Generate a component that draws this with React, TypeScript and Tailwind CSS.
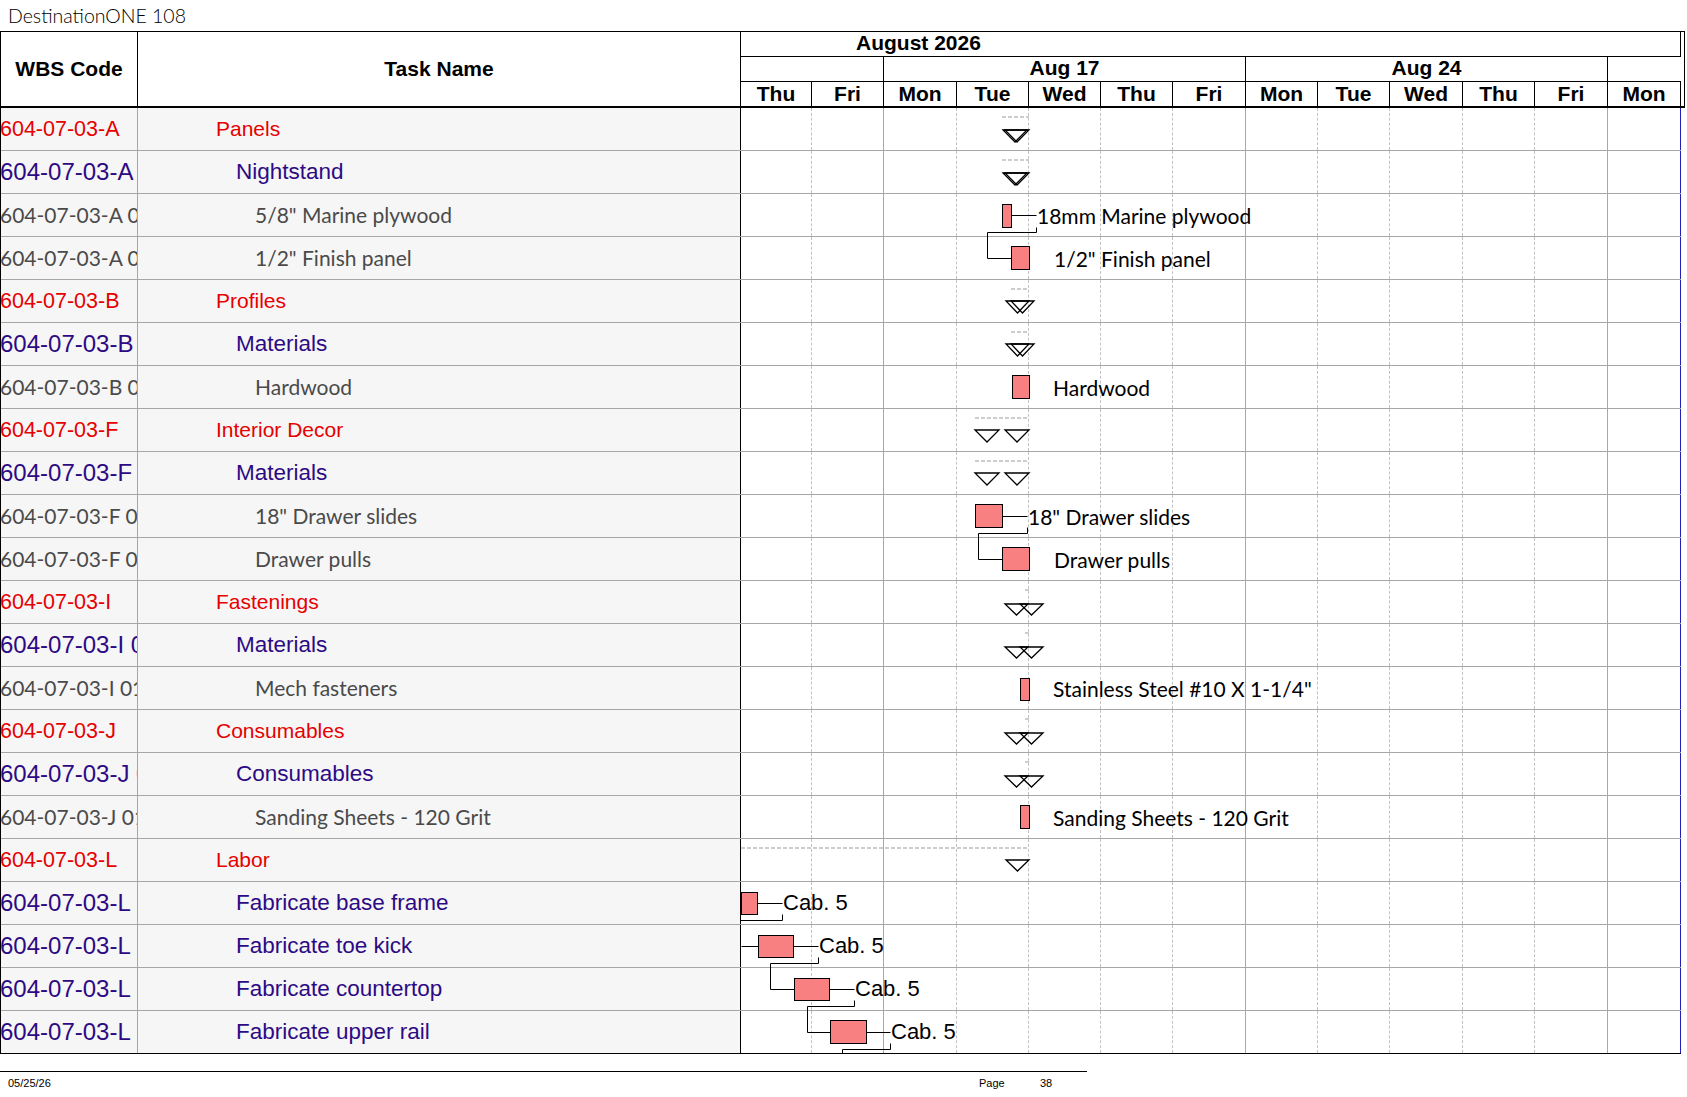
import React from 'react'

type Row = { wbs: string; task: string; lvl: 1 | 2 | 3 }

const rows: Row[] = [
  { wbs: '604-07-03-A', task: 'Panels', lvl: 1 },
  { wbs: '604-07-03-A 01', task: 'Nightstand', lvl: 2 },
  { wbs: '604-07-03-A 01 01', task: '5/8" Marine plywood', lvl: 3 },
  { wbs: '604-07-03-A 01 02', task: '1/2" Finish panel', lvl: 3 },
  { wbs: '604-07-03-B', task: 'Profiles', lvl: 1 },
  { wbs: '604-07-03-B 01', task: 'Materials', lvl: 2 },
  { wbs: '604-07-03-B 01 01', task: 'Hardwood', lvl: 3 },
  { wbs: '604-07-03-F', task: 'Interior Decor', lvl: 1 },
  { wbs: '604-07-03-F 01', task: 'Materials', lvl: 2 },
  { wbs: '604-07-03-F 01 01', task: '18" Drawer slides', lvl: 3 },
  { wbs: '604-07-03-F 01 02', task: 'Drawer pulls', lvl: 3 },
  { wbs: '604-07-03-I', task: 'Fastenings', lvl: 1 },
  { wbs: '604-07-03-I 01', task: 'Materials', lvl: 2 },
  { wbs: '604-07-03-I 01 01', task: 'Mech fasteners', lvl: 3 },
  { wbs: '604-07-03-J', task: 'Consumables', lvl: 1 },
  { wbs: '604-07-03-J 01', task: 'Consumables', lvl: 2 },
  { wbs: '604-07-03-J 01 01', task: 'Sanding Sheets - 120 Grit', lvl: 3 },
  { wbs: '604-07-03-L', task: 'Labor', lvl: 1 },
  { wbs: '604-07-03-L 01', task: 'Fabricate base frame', lvl: 2 },
  { wbs: '604-07-03-L 02', task: 'Fabricate toe kick', lvl: 2 },
  { wbs: '604-07-03-L 03', task: 'Fabricate countertop', lvl: 2 },
  { wbs: '604-07-03-L 04', task: 'Fabricate upper rail', lvl: 2 },
]

const days = ['Thu', 'Fri', 'Mon', 'Tue', 'Wed', 'Thu', 'Fri', 'Mon', 'Tue', 'Wed', 'Thu', 'Fri', 'Mon']

const arial = "font-['Liberation_Sans',Arial,sans-serif]"
const calibri = "font-['Lato','Open_Sans',sans-serif]"

const wbsCls = {
  1: `${arial} text-[21.5px] text-[#e60000]`,
  2: `${arial} text-[24px] text-[#2d0a84]`,
  3: `${calibri} text-[21px] text-[#4a4a4a]`,
}
const taskCls = {
  1: `${arial} text-[21px] text-[#e60000] pl-[78px]`,
  2: `${arial} text-[22.5px] text-[#2d0a84] pl-[98px]`,
  3: `${calibri} text-[21px] text-[#4a4a4a] pl-[117px]`,
}

function cellLine(i: number) {
  if (i === 12) return 'border-r border-[#2020c0]'
  if (i === 1 || i === 6 || i === 11) return 'border-r border-[#a8a8a8]'
  return 'border-r border-dashed border-[#c2c2c2]'
}

const rt = (k: number) => k * 43

function Summary({ k, dash, tris, top = 22, h = 12 }: { k: number; dash: [number, number]; tris: [number, number][]; top?: number; h?: number }) {
  const y = rt(k) + top
  return (
    <g>
      <line x1={dash[0]} x2={dash[1]} y1={rt(k) + 9} y2={rt(k) + 9} stroke="#bdbdbd" strokeWidth={1.5} strokeDasharray="4 2" />
      {tris.map(([a, b], i) => (
        <polygon key={i} points={`${a},${y} ${b},${y} ${(a + b) / 2},${y + h}`} fill="none" stroke="#000" strokeWidth={1.3} />
      ))}
    </g>
  )
}

function Bar({ k, x1, x2, top = 10, h = 23 }: { k: number; x1: number; x2: number; top?: number; h?: number }) {
  return <rect x={x1 + 0.5} y={rt(k) + top + 0.5} width={x2 - x1} height={h} fill="#f98080" stroke="#000" strokeWidth={1} />
}

function Path({ pts }: { pts: [number, number][] }) {
  return <polyline points={pts.map(([x, y]) => `${x + 0.5},${y + 0.5}`).join(' ')} fill="none" stroke="#000" strokeWidth={1} />
}

const labels: { k: number; x: number; text: string; cab?: boolean }[] = [
  { k: 2, x: 295, text: '18mm Marine plywood' },
  { k: 3, x: 312, text: '1/2" Finish panel' },
  { k: 6, x: 311, text: 'Hardwood' },
  { k: 9, x: 286, text: '18" Drawer slides' },
  { k: 10, x: 312, text: 'Drawer pulls' },
  { k: 13, x: 311, text: 'Stainless Steel #10 X 1-1/4"' },
  { k: 16, x: 311, text: 'Sanding Sheets - 120 Grit' },
  { k: 18, x: 41, text: 'Cab. 5', cab: true },
  { k: 19, x: 77, text: 'Cab. 5', cab: true },
  { k: 20, x: 113, text: 'Cab. 5', cab: true },
  { k: 21, x: 149, text: 'Cab. 5', cab: true },
]

function Chart() {
  const c = (k: number) => rt(k) + 21
  return (
    <svg className="absolute left-0 top-0" width={940} height={946}>
      <Summary k={0} dash={[261, 288]} tris={[[262, 286], [264, 288]]} />
      <Summary k={1} dash={[261, 288]} tris={[[262, 286], [264, 288]]} />
      <Bar k={2} x1={261} x2={270} />
      <Path pts={[[270, c(2)], [295, c(2)]]} />
      <Path pts={[[295, rt(2) + 33], [295, rt(2) + 38], [246, rt(2) + 38], [246, rt(3) + 21], [270, rt(3) + 21]]} />
      <Bar k={3} x1={270} x2={288} top={9} />
      <Summary k={4} dash={[270, 288]} tris={[[265, 288], [270, 293]]} top={21} />
      <Summary k={5} dash={[270, 288]} tris={[[265, 288], [270, 293]]} top={21} />
      <Bar k={6} x1={271} x2={288} top={9} />
      <Summary k={7} dash={[234, 288]} tris={[[234, 258], [264, 288]]} top={21} />
      <Summary k={8} dash={[234, 288]} tris={[[234, 258], [264, 288]]} top={21} />
      <Bar k={9} x1={234} x2={261} top={9} />
      <Path pts={[[261, c(9)], [286, c(9)]]} />
      <Path pts={[[286, rt(9) + 32], [286, rt(9) + 38], [237, rt(9) + 38], [237, rt(10) + 21], [261, rt(10) + 21]]} />
      <Bar k={10} x1={261} x2={288} top={9} />
      <Summary k={11} dash={[284, 288]} tris={[[264, 287], [279, 302]]} top={23} h={11} />
      <Summary k={12} dash={[284, 288]} tris={[[264, 287], [279, 302]]} top={23} h={11} />
      <Bar k={13} x1={279} x2={288} top={11} h={22} />
      <Summary k={14} dash={[284, 288]} tris={[[264, 287], [279, 302]]} top={23} h={11} />
      <Summary k={15} dash={[284, 288]} tris={[[264, 287], [279, 302]]} top={23} h={11} />
      <Bar k={16} x1={279} x2={288} top={9} />
      <Summary k={17} dash={[0, 288]} tris={[[265, 288]]} top={21} h={11} />
      <Bar k={18} x1={0} x2={16} h={22} />
      <Path pts={[[16, c(18)], [41, c(18)]]} />
      <Path pts={[[41, rt(18) + 32], [41, rt(18) + 38], [-5, rt(18) + 38]]} />
      <Path pts={[[0, c(19)], [17, c(19)]]} />
      <Bar k={19} x1={17} x2={52} h={22} />
      <Path pts={[[52, c(19)], [77, c(19)]]} />
      <Path pts={[[77, rt(19) + 32], [77, rt(19) + 38], [29, rt(19) + 38], [29, rt(20) + 21], [53, rt(20) + 21]]} />
      <Bar k={20} x1={53} x2={88} h={22} />
      <Path pts={[[88, c(20)], [113, c(20)]]} />
      <Path pts={[[113, rt(20) + 32], [113, rt(20) + 38], [66, rt(20) + 38], [66, rt(21) + 21], [89, rt(21) + 21]]} />
      <Bar k={21} x1={89} x2={125} top={9} h={23} />
      <Path pts={[[125, c(21)], [149, c(21)]]} />
      <Path pts={[[149, rt(21) + 32], [149, rt(21) + 38], [101, rt(21) + 38], [101, rt(21) + 50]]} />
    </svg>
  )
}

export default function App() {
  return (
    <div className={`w-[1687px] h-[1097px] bg-white overflow-hidden text-black ${arial}`}>
      <div className={`h-[31px] pl-[8px] pt-[1px] text-[19.5px] font-light text-black ${calibri}`}>DestinationONE 108</div>

      <div className="w-[1685px] border-t border-black">
        {/* header */}
        <div className="flex h-[76px] border-b-2 border-black">
          <div className="w-[138px] shrink-0 border-l border-r border-black flex items-center justify-center text-[21px] font-bold">WBS Code</div>
          <div className="w-[603px] shrink-0 border-r border-black flex items-center justify-center text-[21px] font-bold">Task Name</div>
          <div className="w-[940px] shrink-0 flex flex-col text-[21px] font-bold">
            <div className="h-[25px] border-b border-r border-black pl-[115px] pb-[3px] flex items-center leading-none">August 2026</div>
            <div className="h-[25px] border-b border-black grid grid-cols-[143px_362px_362px_73px]">
              <div className="border-r border-black" />
              <div className="border-r border-black flex items-center justify-center leading-none pb-[3px]">Aug 17</div>
              <div className="border-r border-black flex items-center justify-center leading-none pb-[3px]">Aug 24</div>
              <div />
            </div>
            <div className="flex-1 grid grid-cols-[71px_72px_73px_72px_72px_72px_73px_72px_72px_73px_72px_73px_73px]">
              {days.map((d, i) => (
                <div key={i} className="border-r border-black flex items-center justify-center leading-none pb-[2px]">{d}</div>
              ))}
            </div>
          </div>
          <div className="w-[4px] shrink-0 border-r border-black" />
        </div>

        {/* body */}
        <div className="flex">
          <div className="w-[741px] shrink-0 border-l border-black">
            {rows.map((r, k) => (
              <div key={k} className={`flex h-[43px] bg-[#f6f6f6] ${k === rows.length - 1 ? 'border-b border-black' : 'border-b border-[#a6a6a6]'}`}>
                <div className="w-[137px] shrink-0 border-r border-[#a6a6a6] overflow-hidden whitespace-nowrap flex items-center">
                  <span className={`-ml-[1px] ${wbsCls[r.lvl]}`}>{r.wbs}</span>
                </div>
                <div className={`flex-1 border-r border-black flex items-center whitespace-nowrap ${taskCls[r.lvl]}`}>{r.task}</div>
              </div>
            ))}
          </div>
          <div className="relative w-[940px] shrink-0">
            {rows.map((_, k) => (
              <div key={k} className={`h-[43px] grid grid-cols-[71px_72px_73px_72px_72px_72px_73px_72px_72px_73px_72px_73px_73px] ${k === rows.length - 1 ? 'border-b border-black' : 'border-b border-[#a6a6a6]'}`}>
                {days.map((_, i) => (
                  <div key={i} className={cellLine(i)} />
                ))}
              </div>
            ))}
            <Chart />
            {labels.map((l, i) => (
              <span
                key={i}
                className={`absolute -translate-y-1/2 whitespace-nowrap leading-none ${l.cab ? `${arial} text-[22px]` : `${calibri} text-[21px]`} text-black`}
                style={{ left: l.x + 1, top: rt(l.k) + 21 }}
              >
                {l.text}
              </span>
            ))}
          </div>
        </div>
      </div>

      {/* footer */}
      <div className="mt-[17px] w-[1087px] border-t border-black flex pt-[6px] text-[11px] leading-none">
        <div className="pl-[8px] w-[979px]">05/25/26</div>
        <div className="w-[61px]">Page</div>
        <div>38</div>
      </div>
    </div>
  )
}
